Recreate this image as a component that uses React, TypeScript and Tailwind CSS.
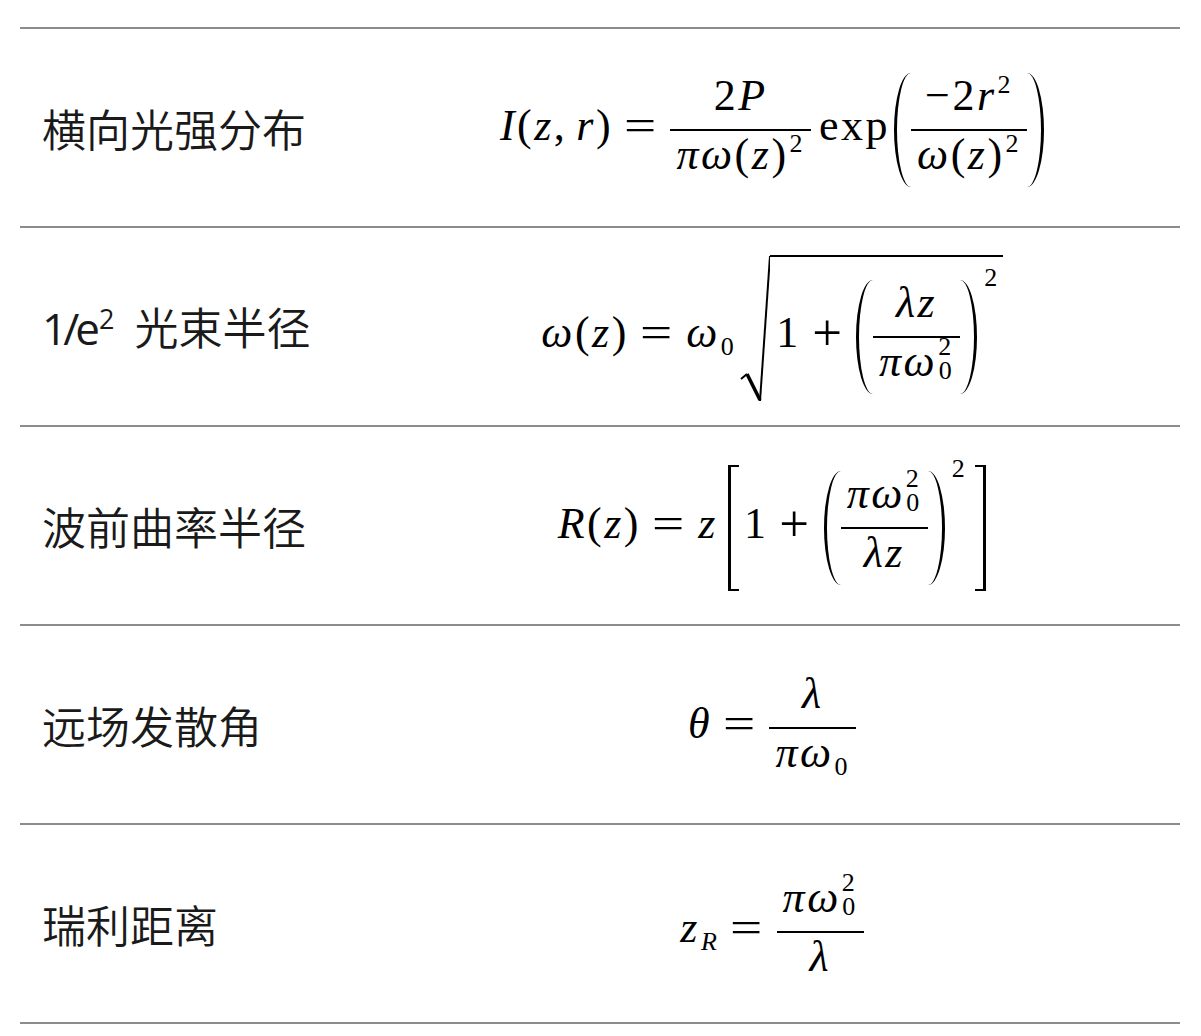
import React from "react";

type C = { children?: React.ReactNode; className?: string };

const I = ({ children, className = "" }: C) => (
  <span className={"italic " + className}>{children}</span>
);

const M = ({ children, className = "" }: C) => (
  <span className={"mb-[8px] whitespace-nowrap " + className}>{children}</span>
);

const Eq = () => <M className="mx-[15px] scale-x-[1.3]">=</M>;
const Plus = () => <M className="mx-[14px] scale-[1.2]">+</M>;

const Sup = ({ children, className = "" }: C) => (
  <span className={"relative -top-[17px] text-[26px] not-italic ml-[1px] " + className}>{children}</span>
);

const Sub = ({ children, className = "" }: C) => (
  <span className={"relative top-[8px] text-[26px] ml-[1px] " + className}>{children}</span>
);

const SubSup = () => (
  <>
    <span className="relative -top-[21px] text-[26px] not-italic ml-[1px]">2</span>
    <span className="relative top-[3px] text-[26px] not-italic -ml-[15px]">0</span>
  </>
);

const Frac = ({
  num,
  den,
  className = "",
}: {
  num: React.ReactNode;
  den: React.ReactNode;
  className?: string;
}) => (
  <span className={"flex flex-col items-stretch " + className}>
    <span className="h-[56px] flex items-end justify-center pb-[11px] px-[6px]">
      <span className="whitespace-nowrap">{num}</span>
    </span>
    <span className="h-[2px] bg-black" />
    <span className="h-[56px] flex items-start justify-center pt-[2px] px-[6px]">
      <span className="whitespace-nowrap">{den}</span>
    </span>
  </span>
);

const Paren = ({ children, sup }: { children: React.ReactNode; sup?: React.ReactNode }) => (
  <span className="flex items-stretch">
    <span className="w-[17px] border-l-[3px] border-black rounded-l-[100%_50%]" />
    {children}
    <span className="w-[17px] border-r-[3px] border-black rounded-r-[100%_50%]" />
    {sup ? <span className="self-start -mt-[15px] ml-[7px] text-[26px]">{sup}</span> : null}
  </span>
);

const Sqrt = ({ children }: C) => (
  <span className="flex items-stretch mb-[16px]">
    <svg width="30" height="148" viewBox="0 0 30 148" className="shrink-0">
      <path d="M1 124 L7 119" stroke="black" strokeWidth="2" fill="none" />
      <path d="M7 119 L20 145" stroke="black" strokeWidth="3.5" fill="none" />
      <path d="M20 146 L30 1" stroke="black" strokeWidth="2" fill="none" />
    </svg>
    <span className="flex items-center border-t-2 border-black pt-[23px] pb-[9px] pl-[6px] pr-[3px]">
      {children}
    </span>
  </span>
);

const Bracket = ({ children }: C) => (
  <span className="flex items-stretch">
    <span className="w-[11px] border-l-[3px] border-y-2 border-black" />
    <span className="flex items-center py-[6px] pl-[5px] pr-[8px]">{children}</span>
    <span className="w-[11px] border-r-[3px] border-y-2 border-black" />
  </span>
);

const rows: { label: React.ReactNode; formula: React.ReactNode; offset: string }[] = [
  {
    label: "横向光强分布",
    offset: "mt-[5px]",
    formula: (
      <>
        <M>
          <I>I</I>(<I>z</I>,<I className="ml-[9px]">r</I>)
        </M>
        <Eq />
        <Frac
          num={
            <>
              2<I>P</I>
            </>
          }
          den={
            <>
              <I>π</I>
              <I>ω</I>(<I>z</I>)<Sup>2</Sup>
            </>
          }
        />
        <M className="ml-[8px] mr-[4px]">exp</M>
        <Paren>
          <Frac
            num={
              <>
                −2<I>r</I>
                <Sup>2</Sup>
              </>
            }
            den={
              <>
                <I>ω</I>(<I>z</I>)<Sup>2</Sup>
              </>
            }
          />
        </Paren>
      </>
    ),
  },
  {
    label: (
      <>
        <span className="font-['Open_Sans',sans-serif] font-normal tracking-[-4px]">
          1/e<span className="relative -top-[16px] text-[27px] ml-[3px]">2</span>
        </span>
        <span className="ml-[24px]">光束半径</span>
      </>
    ),
    offset: "mt-[21px]",
    formula: (
      <>
        <M>
          <I>ω</I>(<I>z</I>)
        </M>
        <Eq />
        <M className="mr-[4px]">
          <I>ω</I>
          <Sub>0</Sub>
        </M>
        <Sqrt>
          <M>1</M>
          <Plus />
          <Paren sup="2">
            <Frac
              num={
                <>
                  <I>λ</I>
                  <I>z</I>
                </>
              }
              den={
                <>
                  <I>π</I>
                  <I>ω</I>
                  <SubSup />
                </>
              }
            />
          </Paren>
        </Sqrt>
      </>
    ),
  },
  {
    label: "波前曲率半径",
    offset: "mt-[5px]",
    formula: (
      <>
        <M>
          <I>R</I>(<I>z</I>)
        </M>
        <Eq />
        <M className="mr-[10px]">
          <I>z</I>
        </M>
        <Bracket>
          <M>1</M>
          <Plus />
          <Paren sup="2">
            <Frac
              num={
                <>
                  <I>π</I>
                  <I>ω</I>
                  <SubSup />
                </>
              }
              den={
                <>
                  <I>λ</I>
                  <I>z</I>
                </>
              }
            />
          </Paren>
        </Bracket>
      </>
    ),
  },
  {
    label: "远场发散角",
    offset: "mt-[7px]",
    formula: (
      <>
        <M>
          <I>θ</I>
        </M>
        <Eq />
        <Frac
          num={<I>λ</I>}
          den={
            <>
              <I>π</I>
              <I>ω</I>
              <Sub>0</Sub>
            </>
          }
        />
      </>
    ),
  },
  {
    label: "瑞利距离",
    offset: "mt-[17px]",
    formula: (
      <>
        <M>
          <I>z</I>
          <Sub>
            <I>R</I>
          </Sub>
        </M>
        <Eq />
        <Frac
          num={
            <>
              <I>π</I>
              <I>ω</I>
              <SubSup />
            </>
          }
          den={<I>λ</I>}
        />
      </>
    ),
  },
];

export default function App() {
  return (
    <div className="w-[1201px] h-[1036px] bg-white pt-[27px] pl-[20px]">
      <div className="w-[1160px] border-t-2 border-[#8c8c8c]">
        {rows.map((r, i) => (
          <div key={i} className="h-[199px] border-b-2 border-[#8c8c8c] flex items-center">
            <div className="w-[344px] pl-[22px] text-[44px] leading-none font-[350] text-[#1a1a1a] font-['Noto_Sans_CJK_SC','Noto_Sans',sans-serif] whitespace-nowrap">
              {r.label}
            </div>
            <div className="flex-1 flex justify-center">
              <div
                className={
                  "flex items-center text-[44px] leading-none tracking-[2.5px] text-black font-['Liberation_Serif',serif] " +
                  r.offset
                }
              >
                {r.formula}
              </div>
            </div>
          </div>
        ))}
      </div>
    </div>
  );
}
